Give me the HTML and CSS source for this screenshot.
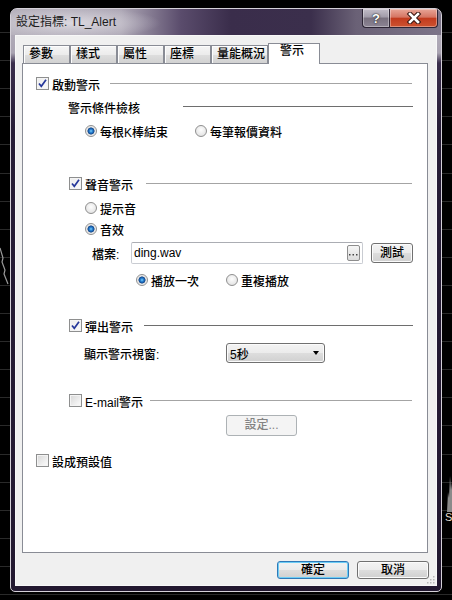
FILE: index.html
```html
<!DOCTYPE HTML>
<html>
<head>
<meta charset="utf-8">
<title>設定指標: TL_Alert</title>
<link rel="stylesheet" href="styles.css">
</head>
<body>
	<svg class="chart-left" width="10" height="50" viewBox="0 0 10 50"><polyline points="0,2 3,12 2,16 5,24 4,28 8,38" fill="none" stroke="#9a9a9a" stroke-width="1.2"/></svg>
	<svg class="chart-right" width="8" height="50" viewBox="0 0 8 50"><polygon points="2,40 3,20 4,26 5,4 6,18 7,10 8,40" fill="#8a8a8a"/><text x="0" y="49" font-size="11" font-family="Liberation Sans" fill="#e6dcd0">S</text></svg>

	<div class="window">
		<div class="titlebar">
			<span class="title">設定指標: TL_Alert</span>
			<div class="capbtns">
				<div class="capbtn help">?</div>
				<div class="capbtn close">
					<svg width="16" height="12" viewBox="0 0 16 12">
						<path d="M4 2 L12 10 M12 2 L4 10" stroke="#3b1812" stroke-width="4.6" stroke-linecap="square" fill="none"/>
						<path d="M4 2 L12 10 M12 2 L4 10" stroke="#fff" stroke-width="2.6" stroke-linecap="square" fill="none"/>
					</svg>
				</div>
			</div>
		</div>

		<div class="client">
			<div class="tabs">
				<div class="tab">參數</div>
				<div class="tab">樣式</div>
				<div class="tab">屬性</div>
				<div class="tab">座標</div>
				<div class="tab wide">量能概況</div>
				<div class="tab on">警示</div>
			</div>

			<div class="panel">
				<!-- 啟動警示 -->
				<div class="row">
					<span class="chk on"><svg width="11" height="11" viewBox="0 0 11 11"><path d="M2 5.5 L4.3 8.3 L9 1.8" stroke="#25379a" stroke-width="1.7" fill="none"/></svg></span>
					<span class="lbl w-main">啟動警示</span>
					<span class="rule"></span>
				</div>
				<div class="row gap3 ind-cond">
					<span class="lbl w-cond">警示條件檢核</span>
					<span class="rule dark"></span>
				</div>
				<div class="row gap4 ind-radio">
					<span class="opt w-110"><span class="rad on"></span>每根K棒結束</span>
					<span class="opt"><span class="rad"></span>每筆報價資料</span>
				</div>

				<!-- 聲音警示 -->
				<div class="row gap33 ind-sub">
					<span class="chk on"><svg width="11" height="11" viewBox="0 0 11 11"><path d="M2 5.5 L4.3 8.3 L9 1.8" stroke="#25379a" stroke-width="1.7" fill="none"/></svg></span>
					<span class="lbl w-sound">聲音警示</span>
					<span class="rule"></span>
				</div>
				<div class="row gap4 ind-radio">
					<span class="opt"><span class="rad"></span>提示音</span>
				</div>
				<div class="row gap1 ind-radio">
					<span class="opt"><span class="rad on"></span>音效</span>
				</div>
				<div class="row file gap3 ind-file">
					<span class="lbl w-file">檔案:</span>
					<div class="textbox">
						<span class="val">ding.wav</span>
						<span class="dots"><svg width="9" height="3" viewBox="0 0 9 3" fill="#444"><rect x="0" y="0" width="1.5" height="1.5"/><rect x="3.5" y="0" width="1.5" height="1.5"/><rect x="7" y="0" width="1.5" height="1.5"/></svg></span>
					</div>
					<button class="btn test">測試</button>
				</div>
				<div class="row gap6 ind-play">
					<span class="opt w-90"><span class="rad on"></span>播放一次</span>
					<span class="opt"><span class="rad"></span>重複播放</span>
				</div>

				<!-- 彈出警示 -->
				<div class="row gap26 ind-sub">
					<span class="chk on"><svg width="11" height="11" viewBox="0 0 11 11"><path d="M2 5.5 L4.3 8.3 L9 1.8" stroke="#25379a" stroke-width="1.7" fill="none"/></svg></span>
					<span class="lbl w-popup">彈出警示</span>
					<span class="rule dark"></span>
				</div>
				<div class="row gap7 ind-show">
					<span class="lbl w-show">顯示警示視窗:</span>
					<div class="select"><span>5秒</span><span class="arrow"></span></div>
				</div>

				<!-- E-mail警示 -->
				<div class="row gap28 ind-sub">
					<span class="chk"></span>
					<span class="lbl w-mail">E-mail警示</span>
					<span class="rule"></span>
				</div>
				<div class="row setrow gap4 ind-set">
					<button class="btn off">設定...</button>
				</div>

				<div class="row gap15">
					<span class="chk"></span>
					<span class="lbl">設成預設值</span>
				</div>
			</div>

			<div class="footer">
				<button class="btn big def">確定</button>
				<button class="btn big">取消</button>
			</div>

			<svg class="grip" width="8" height="8" viewBox="0 0 8 8" fill="#b8b8b8">
				<rect x="6" y="0" width="1.5" height="1.5"/>
				<rect x="3" y="3" width="1.5" height="1.5"/><rect x="6" y="3" width="1.5" height="1.5"/>
				<rect x="0" y="6" width="1.5" height="1.5"/><rect x="3" y="6" width="1.5" height="1.5"/><rect x="6" y="6" width="1.5" height="1.5"/>
			</svg>
		</div>
	</div>
</body>
</html>
```

FILE: styles.css
```css
*{
	margin: 0;
	padding: 0;
	box-sizing: border-box;
}

body{
	width: 452px;
	height: 600px;
	overflow: hidden;
	position: relative;
	background-color: #000;
	background-image: repeating-linear-gradient(to bottom, transparent 0, transparent 27px, #2a2a2a 27px, #2a2a2a 28.1px);
	background-position: 0 5px;
	font-family: "Liberation Sans", "Noto Sans CJK TC", sans-serif;
	font-size: 12px;
	font-weight: 500;
	color: #000;
}

.chart-left{
	position: absolute;
	left: 0;
	top: 246px;
}
.chart-right{
	position: absolute;
	left: 445px;
	top: 472px;
}

/* 視窗外框 */
.window{
	margin: 8px 0 0 10px;
	width: 432px;
	height: 584px;
	border: 1px solid #d4d0d8;
	border-radius: 7px 7px 5px 5px;
	background: linear-gradient(to bottom, #bab5c1 0, #a9a3b1 44px, #3a2e4c 54px, #271d37 120px, #221830 100%);
	display: flex;
	flex-direction: column;
	overflow: hidden;
}

.titlebar{
	height: 26px;
	display: flex;
	justify-content: space-between;
	padding-left: 5px;
	background:
		radial-gradient(ellipse 90px 16px at 60px 14px, rgba(226,224,230,.85), rgba(226,224,230,0)),
		linear-gradient(to right, #b6b1bc 0, #aea8b6 110px, #5a4c6c 170px, #3a2d4b 220px, #3b2f4c 300px, #6a6176 345px, #7c7488 100%);
}
.title{
	line-height: 27px;
	color: #1c1c1c;
	font-weight: 400;
}
.capbtns{
	display: flex;
	margin-right: 3px;
}
.capbtn{
	height: 19px;
	border: 1px solid #2c2434;
	border-top: none;
	display: flex;
	align-items: center;
	justify-content: center;
	box-shadow: inset 0 0 0 1px rgba(255,255,255,.35);
}
.help{
	width: 27px;
	border-radius: 0 0 0 4px;
	border-right: none;
	background: linear-gradient(to bottom, #c2bdc8 0, #a19ba9 45%, #79717f 50%, #8c8494 100%);
	color: #fff;
	font-weight: bold;
	font-size: 13px;
	text-shadow: 0 0 2px #222, 0 0 1px #222;
}
.close{
	width: 49px;
	border-radius: 0 0 4px 0;
	background: linear-gradient(to bottom, #e8a698 0, #d57562 45%, #c23b1e 52%, #cd5230 100%);
}

/* 用戶區 */
.client{
	flex: 1;
	margin: 0 4px 5px 4px;
	background-color: #f0f0f0;
	border: 1px solid #f8f8f8;
	position: relative;
}

.tabs{
	display: flex;
	height: 20px;
	margin: 7px 0 0 7px;
	position: relative;
	z-index: 1;
}
.tab{
	width: 47px;
	height: 18px;
	margin-top: 2px;
	border: 1px solid #898c95;
	border-bottom: none;
	padding-left: 5px;
	line-height: 16px;
	background: linear-gradient(to bottom, #f5f5f5 0, #ececec 50%, #dedede 51%, #d2d2d2 100%);
	box-shadow: inset 1px 1px 0 #fdfdfd;
}
.tab.wide{
	width: 57px;
}
.tab.on{
	width: 52px;
	height: 21px;
	margin-top: 0;
	padding-left: 11px;
	line-height: 15px;
	background: #fff;
	box-shadow: none;
}

.panel{
	margin-left: 6px;
	width: 406px;
	height: 490px;
	border: 1px solid #898c95;
	background-color: #fff;
	padding: 10px 14px 0 13px;
}

.row{
	display: flex;
	align-items: center;
	height: 20px;
}
.row.file{
	height: 22px;
}
.row.setrow{
	height: 21px;
}
.gap1{ margin-top: 1px; }
.gap3{ margin-top: 3px; }
.gap4{ margin-top: 4px; }
.gap6{ margin-top: 6px; }
.gap7{ margin-top: 7px; }
.gap15{ margin-top: 15px; }
.gap26{ margin-top: 26px; }
.gap28{ margin-top: 28px; }
.gap33{ margin-top: 33px; }

.ind-cond{ padding-left: 32px; }
.ind-radio{ padding-left: 49px; }
.ind-sub{ padding-left: 33px; }
.ind-file{ padding-left: 56px; }
.ind-play{ padding-left: 100px; }
.ind-show{ padding-left: 48px; }
.ind-set{ padding-left: 190px; }

.lbl{
	white-space: nowrap;
	margin-left: 3px;
}
.ind-cond .lbl, .ind-file .lbl, .ind-show .lbl{
	margin-left: 0;
}
.w-main{ width: 58px; }
.w-cond{ width: 115px; }
.w-sound{ width: 61px; }
.w-popup{ width: 59px; }
.w-mail{ width: 65px; }
.w-file{ width: 39px; }
.w-show{ width: 142px; }

.rule{
	flex: 1;
	height: 1px;
	margin-top: -1px;
	margin-right: 1px;
	background-color: #a4a4a4;
}
.rule.dark{
	background-color: #6e6e6e;
	margin-right: 0;
}

/* 核取方塊 */
.chk{
	width: 13px;
	height: 13px;
	flex-shrink: 0;
	margin-top: -1px;
	border: 1px solid #8e8f8f;
	background: linear-gradient(135deg, #d6d6d6 0, #f2f2f2 70%, #fbfbfb 100%);
	box-shadow: inset 0 0 0 1px #f4f4f4;
	display: flex;
	align-items: center;
	justify-content: center;
}
.chk.on{
	background: linear-gradient(135deg, #ececec 0, #fafafa 100%);
}

/* 選項按鈕 */
.opt{
	display: flex;
	align-items: center;
	white-space: nowrap;
}
.w-110{ width: 110px; }
.w-90{ width: 90px; }
.rad{
	width: 12px;
	height: 12px;
	margin-right: 3px;
	border-radius: 50%;
	border: 1px solid #8f8f8f;
	background: radial-gradient(circle at 50% 40%, #fdfdfd 0, #e6e6e6 70%, #d4d4d4 100%);
}
.rad.on{
	background: radial-gradient(circle at 50% 50%, #7fd2fa 0, #2b84d4 1.5px, #12468c 3.2px, #dcdcdc 3.8px, #f4f4f4 5px);
}

/* 檔案輸入 */
.textbox{
	width: 232px;
	height: 22px;
	border: 1px solid #c9ccd2;
	border-top-color: #abadb3;
	border-radius: 2px;
	display: flex;
	align-items: center;
	padding: 0 2px 0 2px;
	background: #fff;
}
.val{
	flex: 1;
	font-size: 12px;
}
.dots{
	width: 13px;
	height: 16px;
	border: 1px solid #8d8d8d;
	border-radius: 2px;
	background: linear-gradient(to bottom, #f6f6f6, #dcdcdc);
	display: flex;
	align-items: flex-end;
	justify-content: center;
	padding-bottom: 3px;
}

.btn{
	font-family: "Liberation Sans", "Noto Sans CJK TC", sans-serif;
	font-size: 12px;
	font-weight: 500;
	color: #000;
	height: 20px;
	border: 1px solid #707070;
	border-radius: 3px;
	background: linear-gradient(to bottom, #f3f3f3 0, #ebebeb 50%, #dddddd 51%, #d0d0d0 100%);
	box-shadow: inset 0 0 0 1px #fbfbfb;
	line-height: 17px;
}
.btn.test{
	width: 42px;
	margin-left: 8px;
}
.btn.off{
	width: 71px;
	height: 21px;
	border-color: #adb2b5;
	background: #f4f4f4;
	box-shadow: none;
	color: #838383;
}
.btn.big{
	width: 72px;
	height: 18px;
	line-height: 15px;
}
.btn.def{
	border-color: #2f79b8;
	box-shadow: inset 0 0 0 1px #6dcdf5;
}

.select{
	width: 99px;
	height: 20px;
	margin-left: 0;
	border: 1px solid #707070;
	border-radius: 3px;
	background: linear-gradient(to bottom, #f3f3f3 0, #ebebeb 50%, #dddddd 51%, #d0d0d0 100%);
	box-shadow: inset 0 0 0 1px #fbfbfb;
	display: flex;
	align-items: center;
	justify-content: space-between;
	padding: 0 5px 0 3px;
}
.arrow{
	width: 0;
	height: 0;
	border-left: 3.5px solid transparent;
	border-right: 3.5px solid transparent;
	border-top: 4px solid #000;
}

.footer{
	display: flex;
	justify-content: flex-end;
	gap: 8px;
	margin-top: 8px;
	padding-right: 7px;
}

.grip{
	position: absolute;
	right: 1px;
	bottom: 1px;
}
```
